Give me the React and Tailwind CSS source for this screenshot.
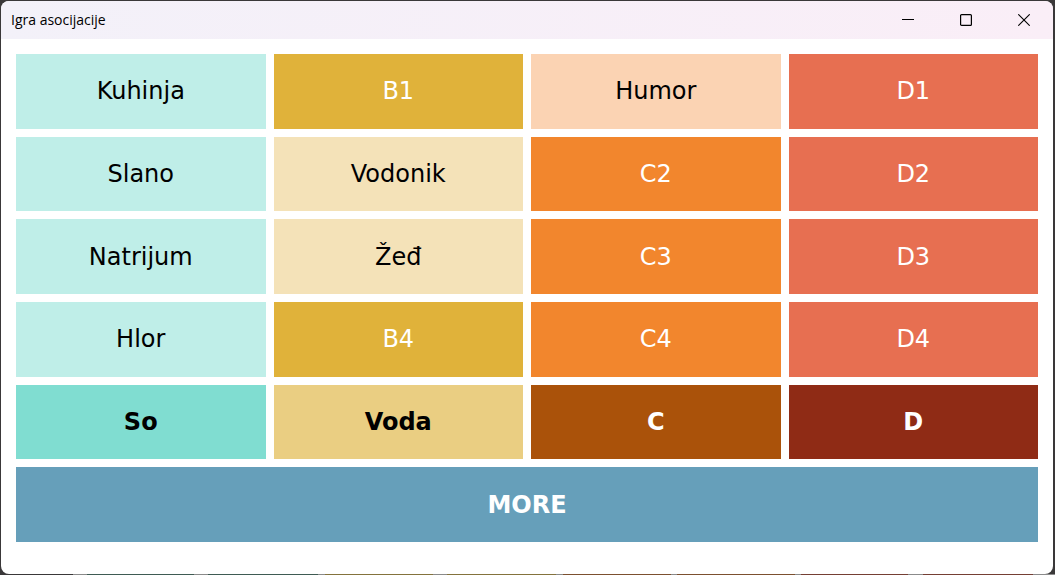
const tiles = [
  ["Kuhinja", "bg-[#bfeee8] text-black"],
  ["B1", "bg-[#e0b23a] text-white"],
  ["Humor", "bg-[#fbd3b3] text-black"],
  ["D1", "bg-[#e76f51] text-white"],
  ["Slano", "bg-[#bfeee8] text-black"],
  ["Vodonik", "bg-[#f4e2b8] text-black"],
  ["C2", "bg-[#f2862d] text-white"],
  ["D2", "bg-[#e76f51] text-white"],
  ["Natrijum", "bg-[#bfeee8] text-black"],
  ["Žeđ", "bg-[#f4e2b8] text-black"],
  ["C3", "bg-[#f2862d] text-white"],
  ["D3", "bg-[#e76f51] text-white"],
  ["Hlor", "bg-[#bfeee8] text-black"],
  ["B4", "bg-[#e0b23a] text-white"],
  ["C4", "bg-[#f2862d] text-white"],
  ["D4", "bg-[#e76f51] text-white"],
  ["So", "bg-[#80ddd1] text-black font-bold"],
  ["Voda", "bg-[#eace82] text-black font-bold"],
  ["C", "bg-[#aa520a] text-white font-bold"],
  ["D", "bg-[#8f2b15] text-white font-bold"],
  ["MORE", "col-span-4 bg-[#669fba] text-white font-bold"],
];

// Slivers of the window behind: relative width and colour
const backdrop = [
  [73, "bg-[#3a3839]"],
  [14, "bg-[#8b8b8b]"],
  [107, "bg-[#3f5b53]"],
  [14, "bg-[#8b8b8b]"],
  [110, "bg-[#3f5b53]"],
  [7, "bg-[#8b8b8b]"],
  [108, "bg-[#84733d]"],
  [14, "bg-[#8b8b8b]"],
  [109, "bg-[#84733d]"],
  [7, "bg-[#8b8b8b]"],
  [108, "bg-[#7c502f]"],
  [6, "bg-[#8b8b8b]"],
  [118, "bg-[#7c502f]"],
  [6, "bg-[#8b8b8b]"],
  [107, "bg-[#753f34]"],
  [15, "bg-[#8b8b8b]"],
  [110, "bg-[#753f34]"],
  [22, "bg-[#8b8b8b]"],
];

function WindowButton({ label, children }) {
  return (
    <button type="button" aria-label={label} className="flex w-[58px] items-center justify-center">
      <svg width="12" height="12" viewBox="0 0 12 12" fill="none" stroke="black" aria-hidden="true">
        {children}
      </svg>
    </button>
  );
}

export default function App() {
  return (
    <div className="flex min-h-screen flex-col bg-[#3a3839]">
      <div className="flex flex-1 flex-col pt-px pr-0.5 pl-px">
        <main className="flex flex-1 flex-col overflow-hidden rounded-lg bg-white">
          <header className="flex h-[38px] justify-between bg-linear-to-r from-[#f3f1f9] to-[#faeef7]">
            <h1 className="flex items-center pl-2.5 font-['Open_Sans',sans-serif] text-sm text-black">
              Igra asocijacije
            </h1>
            <div className="flex">
              <WindowButton label="Minimize">
                <path d="M0 5.5H12" />
              </WindowButton>
              <WindowButton label="Maximize">
                <rect x="0.6" y="0.6" width="10.8" height="10.8" rx="1" strokeWidth="1.2" />
              </WindowButton>
              <WindowButton label="Close">
                <path d="M0.3 0.3L11.7 11.7M11.7 0.3L0.3 11.7" strokeWidth="1.1" />
              </WindowButton>
            </div>
          </header>
          <div className="grid flex-1 auto-rows-fr grid-cols-4 gap-2 px-[15px] pt-[15px] pb-8 font-['DejaVu_Sans',sans-serif] text-2xl">
            {tiles.map(([label, look]) => (
              <button key={label} type="button" className={look}>
                {label}
              </button>
            ))}
          </div>
        </main>
      </div>
      <div className="flex h-px" aria-hidden="true">
        {backdrop.map(([size, color], i) => (
          <span key={i} className={color} style={{ flexGrow: size }} />
        ))}
      </div>
    </div>
  );
}
